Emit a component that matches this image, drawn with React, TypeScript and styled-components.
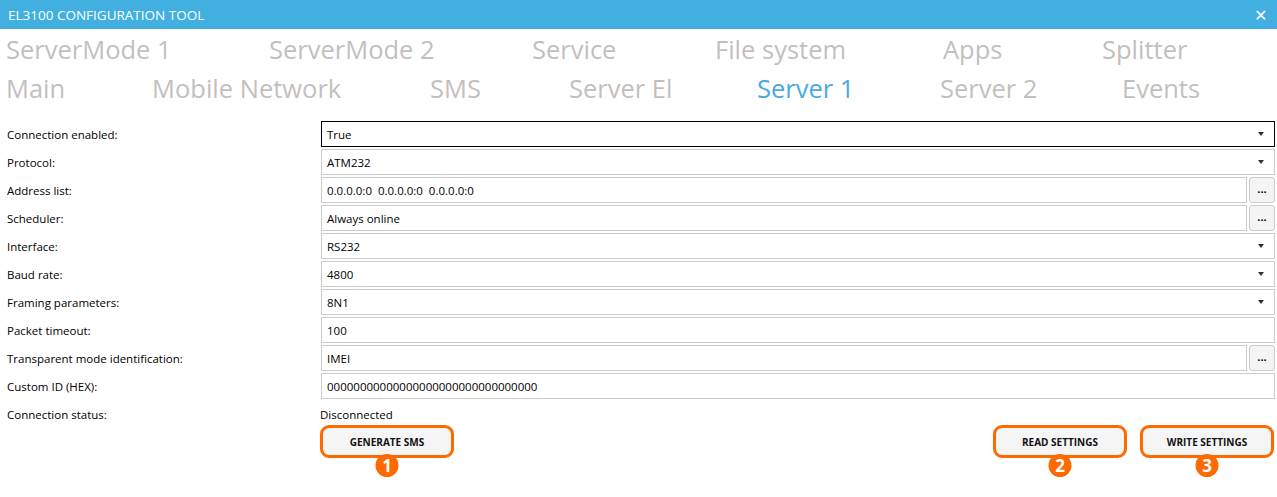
import { Fragment } from "react";
import styled, { createGlobalStyle } from "styled-components";

const GlobalStyle = createGlobalStyle`
	body {
		margin: 0;
		background: #ffffff;
		font-family: "Open Sans", "Noto Sans", sans-serif;
	}
`;

const Window = styled.div`
	width: 1277px;
	height: 497px;
	overflow: hidden;
	background: #ffffff;
`;

const TitleBar = styled.div`
	height: 29px;
	background-color: #41b0e1;
	color: #ffffff;
	display: flex;
	justify-content: space-between;
	align-items: center;
	padding: 0 8px;
	font-size: 13.5px;
`;

const Close = styled.span`
	font-size: 16px;
	margin-right: 2px;
`;

const TabRow = styled.div`
	display: flex;
	height: 39px;
	align-items: center;
	padding-left: 6px;
	&:first-of-type {
		margin-top: 3px;
	}
`;

const Tab = styled.div<{ w: number; active?: boolean }>`
	width: ${(p) => p.w}px;
	flex: none;
	font-size: 25.5px;
	color: ${(p) => (p.active ? "#4aa9e1" : "#c3bfbe")};
	white-space: nowrap;
`;

const Form = styled.div`
	margin-top: 14px;
	display: grid;
	grid-template-columns: 314px 1fr;
	grid-auto-rows: 26px;
	row-gap: 2px;
	padding: 0 2px 0 7px;
	font-size: 11.5px;
	color: #000000;
`;

const Label = styled.div`
	display: flex;
	align-items: center;
`;

const FieldWrap = styled.div`
	display: flex;
	gap: 2px;
`;

const Field = styled.div<{ focused?: boolean }>`
	flex: 1;
	display: flex;
	align-items: center;
	justify-content: space-between;
	padding: 0 10px 0 5px;
	border: 1px solid ${(p) => (p.focused ? "#000000" : "#cccccc")};
	background: #ffffff;
`;

const Value = styled.span`
	white-space: pre;
`;

const Arrow = styled.span`
	width: 0;
	height: 0;
	border-left: 3.5px solid transparent;
	border-right: 3.5px solid transparent;
	border-top: 4px solid #333333;
`;

const Ellipsis = styled.div`
	width: 26px;
	flex: none;
	border: 1px solid #cccccc;
	border-radius: 3px;
	background: #f4f4f4;
	display: flex;
	align-items: center;
	justify-content: center;
	font-size: 11px;
	font-weight: 700;
	box-sizing: border-box;
	padding-bottom: 3px;
`;

const Status = styled.div`
	display: flex;
	align-items: center;
	margin-left: -1px;
`;

const Actions = styled.div`
	display: flex;
	margin: -2px 0 0 320px;
	padding-right: 3px;
`;

const Right = styled.div`
	margin-left: auto;
	display: flex;
	gap: 13px;
`;

const ButtonSlot = styled.div`
	position: relative;
	width: 134px;
`;

const Button = styled.div`
	height: 33px;
	box-sizing: border-box;
	border: 3px solid #ff6a00;
	border-radius: 9px;
	background: #f5f5f5;
	display: flex;
	align-items: center;
	justify-content: center;
	font-size: 10px;
	font-weight: 700;
	color: #111111;
`;

const Badge = styled.div`
	position: absolute;
	left: 50%;
	top: 29px;
	transform: translateX(-50%);
	width: 23px;
	height: 23px;
	border-radius: 50%;
	background: #ff6a00;
	color: #ffffff;
	font-weight: 700;
	font-size: 17px;
	display: flex;
	align-items: center;
	justify-content: center;
	line-height: 1;
`;

const tabs1 = [
	{ name: "ServerMode 1", w: 263 },
	{ name: "ServerMode 2", w: 263 },
	{ name: "Service", w: 183 },
	{ name: "File system", w: 228 },
	{ name: "Apps", w: 159 },
	{ name: "Splitter", w: 150 },
];

const tabs2 = [
	{ name: "Main", w: 146 },
	{ name: "Mobile Network", w: 278 },
	{ name: "SMS", w: 139 },
	{ name: "Server El", w: 188 },
	{ name: "Server 1", w: 183, active: true },
	{ name: "Server 2", w: 182 },
	{ name: "Events", w: 150 },
];

type Row = {
	label: string;
	value: string;
	kind: "select" | "dots" | "text";
	focused?: boolean;
};

const rows: Row[] = [
	{ label: "Connection enabled:", value: "True", kind: "select", focused: true },
	{ label: "Protocol:", value: "ATM232", kind: "select" },
	{ label: "Address list:", value: "0.0.0.0:0  0.0.0.0:0  0.0.0.0:0", kind: "dots" },
	{ label: "Scheduler:", value: "Always online", kind: "dots" },
	{ label: "Interface:", value: "RS232", kind: "select" },
	{ label: "Baud rate:", value: "4800", kind: "select" },
	{ label: "Framing parameters:", value: "8N1", kind: "select" },
	{ label: "Packet timeout:", value: "100", kind: "text" },
	{ label: "Transparent mode identification:", value: "IMEI", kind: "dots" },
	{ label: "Custom ID (HEX):", value: "00000000000000000000000000000000", kind: "text" },
];

export default function App() {
	return (
		<Window>
			<GlobalStyle />
			<TitleBar>
				<span>EL3100 CONFIGURATION TOOL</span>
				<Close>✕</Close>
			</TitleBar>
			<TabRow>
				{tabs1.map((t) => (
					<Tab key={t.name} w={t.w}>
						{t.name}
					</Tab>
				))}
			</TabRow>
			<TabRow>
				{tabs2.map((t) => (
					<Tab key={t.name} w={t.w} active={t.active}>
						{t.name}
					</Tab>
				))}
			</TabRow>
			<Form>
				{rows.map((r) => (
					<Fragment key={r.label}>
						<Label>{r.label}</Label>
						<FieldWrap>
							<Field focused={r.focused}>
								<Value>{r.value}</Value>
								{r.kind === "select" && <Arrow />}
							</Field>
							{r.kind === "dots" && <Ellipsis>...</Ellipsis>}
						</FieldWrap>
					</Fragment>
				))}
				<Label>Connection status:</Label>
				<Status>Disconnected</Status>
			</Form>
			<Actions>
				<ButtonSlot>
					<Button>GENERATE SMS</Button>
					<Badge>1</Badge>
				</ButtonSlot>
				<Right>
					<ButtonSlot>
						<Button>READ SETTINGS</Button>
						<Badge>2</Badge>
					</ButtonSlot>
					<ButtonSlot>
						<Button>WRITE SETTINGS</Button>
						<Badge>3</Badge>
					</ButtonSlot>
				</Right>
			</Actions>
		</Window>
	);
}
